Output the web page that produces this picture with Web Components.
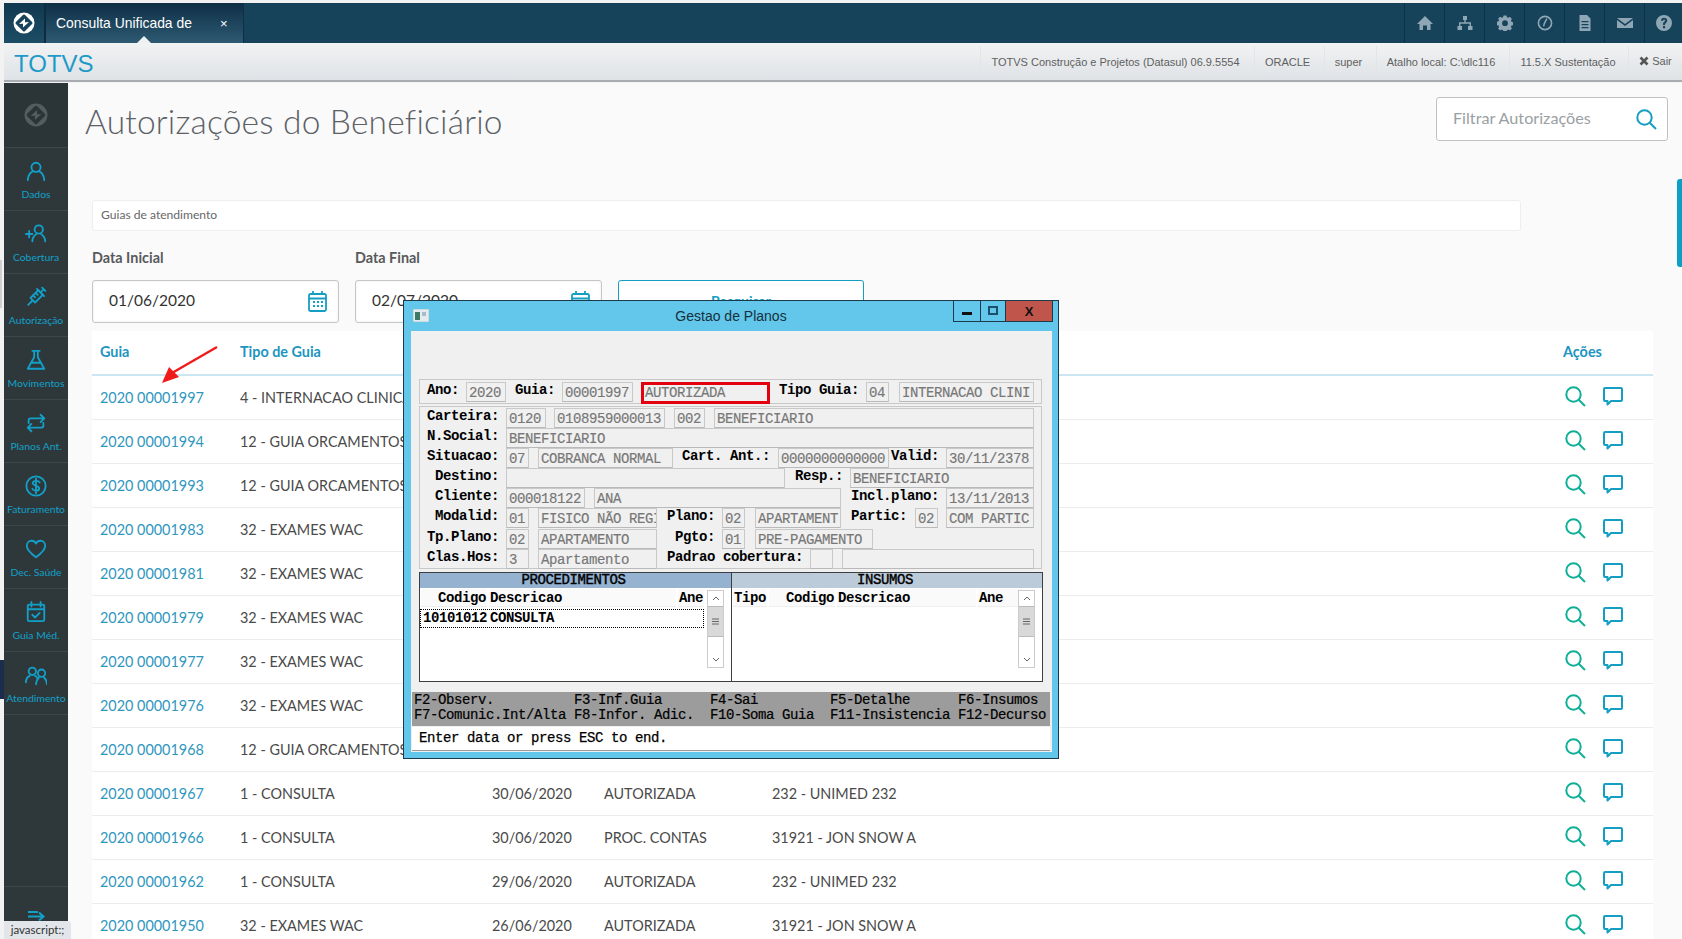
<!DOCTYPE html>
<html><head><meta charset="utf-8">
<style>
html,body{margin:0;padding:0;height:939px;overflow:hidden;background:#fafafa;font-family:"Liberation Sans",sans-serif}
body{padding:3px 0 0 4px;box-sizing:border-box;position:relative;background:#f2f2f2}
</style></head><body>
<app-shell></app-shell>
<script>
const I=(d,w,h,vb,extra='')=>`<svg width="${w}" height="${h}" viewBox="${vb||'0 0 24 24'}" fill="none" stroke="currentColor" stroke-width="2" stroke-linecap="round" stroke-linejoin="round" ${extra}>${d}</svg>`;
function def(n,html,setup){customElements.define(n,class extends HTMLElement{constructor(){super();this.attachShadow({mode:'open'}).innerHTML=typeof html==='function'?html(this):html}connectedCallback(){setup&&setup(this,this.shadowRoot)}})}

const topIcons=[
 '<path d="M8 1 L16 9 H13.5 V15 H10 V10.5 H6 V15 H2.5 V9 H0 Z" fill="currentColor"/>',
 '<path d="M6 1h4v4H8.7v2.3H14V11h1.5v4h-4.5v-4h1.6V8.7H3.4V11H5v4H.5v-4H2V7.3h5.3V5H6z" fill="currentColor"/>',
 '<path fill-rule="evenodd" d="M6.500 1h3l.4 1.700 1.400.6 1.500-1 2.100 2.100-1 1.500.6 1.400 1.700.4v3l-1.700.4-.6 1.400 1 1.500-2.100 2.100-1.500-1-1.400.6-.4 1.700h-3l-.4-1.700-1.400-.6-1.500 1-2.100-2.100 1-1.500-.6-1.400-1.700-.4V7.200l1.700-.4.6-1.400-1-1.500L3.200 2.300l1.500 1 1.400-.6zM8 5.800a2.900 2.900 0 100 5.800 2.900 2.900 0 000-5.800z" fill="currentColor" transform="translate(0 -.5)"/>',
 '<circle cx="8" cy="8" r="6.600" fill="none" stroke="currentColor" stroke-width="1.600"/><path d="M9.800 3.600 L7.200 8.800 L6.600 11.400" stroke="currentColor" stroke-width="1.500" fill="none"/>',
 '<path fill-rule="evenodd" d="M2.500 0H10l3.500 3.500V16h-11zM4.500 6v1.300h7V6zm0 3v1.300h7V9zm0 3v1.300h7V12z" fill="currentColor"/>',
 '<path d="M0 3h16L8 9zM0 5l8 6 8-6v8H0z" fill="currentColor"/>',
 '<path fill-rule="evenodd" d="M8 0a8 8 0 110 16A8 8 0 018 0zM5 5.800h2.200c0-.8.3-1.200.9-1.200s.9.4.9.9c0 1.200-2 1.500-2 3.600V10h2v-.5c0-1.300 2.200-1.700 2.200-4C11.200 3.700 9.900 2.700 8 2.700 6.100 2.700 5 3.900 5 5.800zM7 11v2.200h2.100V11z" fill="currentColor"/>'
];
const logo=(s,fg,bg)=>`<svg width="${s}" height="${s}" viewBox="0 0 22 22"><circle cx="11" cy="11" r="10.500" fill="${fg}"/><path d="M11 4 L18 11 L11 18 L4 11Z" fill="${bg}" stroke="${bg}" stroke-width="3" stroke-linejoin="round"/><path d="M6 12 L12 6.500 L12 11.500Z M16 10 L10 15.500 L10 10.500Z" fill="${fg}"/></svg>`;
def('top-bar',`<style>
:host{display:flex;height:40px;background:#16425a;color:#fff}
.logo{width:40px;display:flex;align-items:center;justify-content:center;background:linear-gradient(#10384f,#1d4d66);border-right:1px solid #0c2c40}
.tab{width:199px;box-sizing:border-box;border-right:1px solid #0e3044;background:linear-gradient(#0e2f46,#2d5a72);display:flex;align-items:center;padding-left:10px;font-size:13.900px;position:relative;border-left:1px solid #0c2c40}
.tab b{font-weight:400;position:absolute;left:174px;font-size:13px}
.tab:after{content:"";position:absolute;bottom:0;left:91px;border:7px solid transparent;border-bottom-color:#eff0f1;border-top:0}
.sp{flex:1}
.ic{width:40px;box-sizing:border-box;border-left:1px solid #0e3044;display:flex;align-items:center;justify-content:center;color:#8fa7b5}
.ic:last-child{width:38px}
</style>
<div class="logo">${logo(22,'#fff','#16425a')}</div>
<div class="tab">Consulta Unificada de<b>×</b></div><div class="sp"></div>`+
topIcons.map(p=>`<div class="ic"><svg width="16" height="16" viewBox="0 0 16 16">${p}</svg></div>`).join(''));

def('sub-bar',`<style>
:host{display:flex;height:39px;box-sizing:border-box;background:linear-gradient(#f1f2f3,#dfe3e7);border-bottom:2px solid #a9adb1;align-items:stretch;color:#5f5f5f;font-size:11px}
.l{flex:1;color:#1e9ac8;font-size:24px;padding:5px 0 0 10px;display:flex;align-items:center}
.s{display:flex;align-items:center;justify-content:center;border-left:1px solid #e2e5e8;margin-top:3px;margin-bottom:3px;box-sizing:border-box;padding:0 4px 0 0}
</style><div class="l">TOTVS</div>
<div class="s" style="width:274px">TOTVS Construção e Projetos (Datasul) 06.9.5554</div>
<div class="s" style="width:70px">ORACLE</div>
<div class="s" style="width:52px">super</div>
<div class="s" style="width:133px">Atalho local: C:\\dlc116</div>
<div class="s" style="width:119px;padding-right:2px">11.5.X Sustentação</div>
<div class="s" style="width:54px;padding:0 0 2px 0"><svg width="10" height="10" viewBox="0 0 10 10" style="margin-right:3px"><path d="M1.500 1.500L8.500 8.500M8.500 1.500L1.500 8.500" stroke="#555" stroke-width="2.600"/></svg>Sair</div>`);

const sideItems=[
 ['Dados','<circle cx="12" cy="8" r="5"/><path d="M3 22c0-6 4-9 5.500-9.500M21 22c0-6-4-9-5.500-9.500"/>'],
 ['Cobertura','<circle cx="15" cy="7" r="4.500"/><path d="M8 20c0-5 3-7 4.500-8M22 20c0-5-3-7-4.500-8M1 12h7M4.500 8.500v7"/>'],
 ['Autorização','<g transform="rotate(45 12 12)"><rect x="8.500" y="5" width="7" height="12"/><path d="M12 17v7M6.500 5h11M12 5V0M9.500 0h5M8.500 9h3M8.500 13h3"/></g>'],
 ['Movimentos','<path d="M8 2h8M10 2v7L3 21.500h18L14 9V2M6.500 15h11"/>'],
 ['Planos Ant.','<path d="M4 12V9a2 2 0 012-2h15M17 3l4 4-4 4M20 12v3a2 2 0 01-2 2H3M7 21l-4-4 4-4"/>'],
 ['Faturamento','<circle cx="12" cy="12" r="10.500"/><path d="M16 8c-1-2-7-2.500-7.500.5C8 12 16 11 15.500 15c-.5 3-6.500 2.500-7.500 0M12 4v16"/>'],
 ['Dec. Saúde','<path d="M12 21C5 16 2 12.500 2 8.500 2 5 4.500 3 7 3c2 0 4 1 5 3 1-2 3-3 5-3 2.500 0 5 2 5 5.500 0 4-3 7.500-10 12.500z"/>'],
 ['Guia Méd.','<rect x="3" y="4" width="18" height="18" rx="1.500"/><path d="M3 9h18M7 1v5M17 1v5M8 15l3 3 5-5"/>'],
 ['Atendimento','<circle cx="8" cy="8" r="4"/><circle cx="18" cy="10" r="4"/><path d="M1 20c0-4 2-6 4-7M11 13c1 .5 2 1.500 2 2M12 22c0-4 2-6 3-7M24 22c0-4-2-6-3-7"/>']
];
def('side-nav',`<style>
:host{display:flex;flex-direction:column;width:64px;background:#2e383b;height:100%;box-sizing:border-box;color:#12a0c8;overflow:hidden;position:relative}
.h{height:65px;border-bottom:1px solid #3d474a;display:flex;align-items:center;justify-content:center;box-sizing:border-box;background:#2b3437}
.i{height:63px;box-sizing:border-box;border-bottom:1px solid #3d474a;display:flex;flex-direction:column;align-items:center;padding-top:12px;white-space:nowrap}
.i span{margin-top:6px;font-family:"Lato",sans-serif;font-size:10.400px;width:63px;text-align:center;display:block}
.sp{flex:1;border-bottom:1px solid #3d474a}
.b{height:52px;display:flex;justify-content:center;padding-top:24px;box-sizing:border-box}
</style>
<div class="h">${logo(24,'#535d60','#2b3437')}</div>`+
sideItems.map(([l,p])=>`<div class="i">${I(p,22,22)}<span>${l}</span></div>`).join('')+
`<div class="sp"></div><div class="b"><svg width="17" height="10" viewBox="0 0 17 10" fill="none" stroke="currentColor" stroke-width="2"><path d="M0 1h10M0 5.500h15M11 1.500l4.500 4-4.500 4"/></svg></div>`);

const cal=`<svg width="19" height="21" viewBox="0 0 19 21" fill="none" stroke="#159ec4" stroke-width="1.800"><rect x="1" y="3" width="17" height="17" rx="1.500"/><path d="M1 7.500h17M5 0v4M14 0v4"/><path d="M5 11h2M9 11h2M13 11h2M5 15h2M9 15h2M13 15h2" stroke-width="1.800"/></svg>`;
def('date-field',t=>`<style>
:host{display:block;width:247px}
label{display:block;font:700 14.400px "Lato",sans-serif;color:#58595b;height:19px;margin-bottom:12px;line-height:18px}
.b{height:43px;box-sizing:border-box;border:1px solid #c3c7c9;border-radius:3px;background:#fff;display:flex;align-items:center;padding:0 11px 0 16px;font:400 15.500px "Lato",sans-serif;color:#333;box-shadow:inset 0 0 3px #eee}
.b span{flex:1;position:relative;top:-1.500px}
</style><label>${t.getAttribute('label')}</label><div class="b"><span>${t.getAttribute('value')}</span>${cal}</div>`);

const lens=c=>`<svg width="21" height="21" viewBox="0 0 21 21" fill="none" stroke="${c}" stroke-width="2"><circle cx="8.500" cy="8.500" r="7.200"/><path d="M13.700 13.700L20 20"/></svg>`;
const bubble=`<svg width="20" height="19" viewBox="0 0 20 19" fill="none" stroke="#159ec4" stroke-width="2" stroke-linejoin="round"><path d="M2 1h16a1 1 0 011 1v11a1 1 0 01-1 1H8l-3.500 3.500V14H2a1 1 0 01-1-1V2a1 1 0 011-1z"/></svg>`;
const rows=[
['00001997','4 - INTERNACAO CLINICA'],['00001994','12 - GUIA ORCAMENTOS'],['00001993','12 - GUIA ORCAMENTOS'],['00001983','32 - EXAMES WAC'],['00001981','32 - EXAMES WAC'],['00001979','32 - EXAMES WAC'],['00001977','32 - EXAMES WAC'],['00001976','32 - EXAMES WAC'],['00001968','12 - GUIA ORCAMENTOS'],
['00001967','1 - CONSULTA','30/06/2020','AUTORIZADA','232 - UNIMED 232'],['00001966','1 - CONSULTA','30/06/2020','PROC. CONTAS','31921 - JON SNOW A'],['00001962','1 - CONSULTA','29/06/2020','AUTORIZADA','232 - UNIMED 232'],['00001950','32 - EXAMES WAC','26/06/2020','AUTORIZADA','31921 - JON SNOW A']];
def('guia-table',`<style>
:host{display:block;background:#fff;font:400 14.400px "Lato",sans-serif;color:#4a4a4a}
.r{display:grid;grid-template-columns:140px 252px 112px 168px 1fr 90px;height:44px;box-sizing:border-box;border-bottom:1px solid #ececec;align-items:center;padding-left:8px;white-space:nowrap}
.r.h{height:45px;border-bottom:2px solid #cbe6f0;color:#1c95bf;font-weight:700;padding-bottom:2px}
.g{color:#2f97bd}
.a{display:flex;align-items:center;gap:17px;padding:0 0 3px 2px}
</style><div class="r h"><div>Guia</div><div>Tipo de Guia</div><div></div><div></div><div></div><div>Ações</div></div>`+
rows.map(r=>`<div class="r"><div class="g">2020 ${r[0]}</div><div>${r[1]}</div><div>${r[2]||''}</div><div>${r[3]||''}</div><div>${r[4]||''}</div><div class="a">${lens('#10b096')}${bubble}</div></div>`).join(''));

const row=(items)=>{let x=419+1;let h='';items.forEach(([a,b,t,k])=>{h+=`<span class="${k==='l'?'lb':k==='r'?'f red':'f'}" style="margin-left:${a-x}px;width:${b-a}px">${t||''}</span>`;x=b});return `<div class="rw">${h}</div>`};
const L=(a,b,t)=>[a,b,t,'l'];
const F=[[L(428,459,'Ano:'),[467,507,'2020'],L(516,554,'Guia:'),[563,634,'00001997'],[642,771,'AUTORIZADA','r'],L(780,859,'Tipo Guia:'),[867,890,'04'],[900,1035,'INTERNACAO CLINI']]];
const G=[
[L(428,499,'Carteira:'),[507,547,'0120'],[555,666,'0108959000013'],[675,706,'002'],[715,1035,'BENEFICIARIO']],
[L(428,499,'N.Social:'),[507,1035,'BENEFICIARIO']],
[L(428,499,'Situacao:'),[507,530,'07'],[539,674,'COBRANCA NORMAL'],L(683,771,'Cart. Ant.:'),[779,890,'0000000000000'],L(892,939,'Valid:'),[947,1035,'30/11/2378']],
[L(436,499,'Destino:'),[507,786,''],L(796,843,'Resp.:'),[851,1035,'BENEFICIARIO']],
[L(436,499,'Cliente:'),[507,586,'000018122'],[595,842,'ANA'],L(852,939,'Incl.plano:'),[947,1035,'13/11/2013']],
[L(436,499,'Modalid:'),[507,530,'01'],[539,658,'FISICO NÃO REGI'],L(668,715,'Plano:'),[723,746,'02'],[756,842,'APARTAMENT'],L(852,907,'Partic:'),[916,939,'02'],[947,1035,'COM PARTIC']],
[L(428,499,'Tp.Plano:'),[507,530,'02'],[539,658,'APARTAMENTO'],L(676,715,'Pgto:'),[723,746,'01'],[756,874,'PRE-PAGAMENTO']],
[L(428,499,'Clas.Hos:'),[507,530,'3'],[539,658,'Apartamento'],L(668,802,'Padrao cobertura:'),[811,834,''],[843,1035,'']]
];
const up='<svg width="8" height="5" viewBox="0 0 8 5"><path d="M1 4l3-3 3 3" fill="none" stroke="#666"/></svg>',dn='<svg width="8" height="5" viewBox="0 0 8 5"><path d="M1 1l3 3 3-3" fill="none" stroke="#666"/></svg>',gr='<svg width="7" height="7" viewBox="0 0 7 7"><path d="M0 1h7M0 3.500h7M0 6h7" stroke="#666"/></svg>';
const sb=`<div class="sb"><i>${up}</i><i class="t">${gr}</i><div class="s"></div><i>${dn}</i></div>`;
def('legacy-window',`<style>
:host{position:absolute;width:656px;height:459px;box-sizing:border-box;background:#62c7ea;border:1px solid #1c3b4a;font:400 14px "Liberation Mono",monospace;letter-spacing:-.4px;color:#000}
.tb{height:30px;display:flex;position:relative}
.ti{position:absolute;left:9px;top:8px}
.tt{position:absolute;left:0;right:0;top:5px;text-align:center;font:400 14px "Liberation Sans",sans-serif;letter-spacing:0;color:#17303c;line-height:20px}
.btns{position:absolute;right:5px;top:0;display:flex;height:21px}
.btn{box-sizing:border-box;height:21px;border:1px solid #1c3b4a;border-top:0;display:flex;align-items:center;justify-content:center;border-left:0}
.client{position:absolute;left:7px;top:30px;width:641px;height:421px;background:#f0f0f0;box-sizing:border-box;padding:48px 0 0 8px;display:flex;flex-direction:column}
.fr{width:623px;box-sizing:border-box;border:1px solid #c8c8c8}
.fr.a{height:25px;margin-bottom:2px;padding-top:2px}
.fr.b{height:163px;padding-top:1px}
.rw{display:flex;height:20.100px;align-items:flex-start;white-space:nowrap;margin-left:-1px}
.lb{font-weight:700;display:block;flex:none;height:20px;line-height:17px;white-space:nowrap}
.f{display:block;flex:none;box-sizing:border-box;height:20px;line-height:20px;border:1px solid #c9c9c9;border-bottom-color:#b9b9b9;color:#777;overflow:hidden;white-space:nowrap;padding-left:2px;-webkit-text-stroke:.15px #777}
.f.red{border:3px solid #e3000f;height:22px;line-height:17px;padding-left:1px}
.pn{display:flex;height:110px;margin-top:3px;width:624px;box-sizing:border-box;border:1.500px solid #3b3f42;background:#fff}
.p{width:311.500px;position:relative;box-sizing:border-box;display:flex;flex-direction:column}
.p+.p{border-left:1.500px solid #3b3f42}
.ph{height:15px;line-height:15px;text-align:center;background:#95b2d0;font-size:14px;-webkit-text-stroke:.4px #000;flex:none;padding-right:4px}
.p+.p .ph{background:#bccbda}
.cols{display:flex;height:18px;margin-top:1px;padding-left:1px;gap:2px;font-weight:700;line-height:18px}
.cols div{background:#fafafa;border-bottom:1px solid #eee;box-sizing:border-box;white-space:nowrap;overflow:hidden;height:18px;padding:0 1px}
.rr{width:284px;height:19px;margin-top:2px;box-sizing:border-box;outline:1px dotted #000;outline-offset:-1px;display:flex;font-weight:700;line-height:18px}
.sb{position:absolute;right:7px;top:17px;width:17px;height:78px;box-sizing:border-box;border:1px solid #ccc;background:#fff;display:flex;flex-direction:column;color:#666}
.sb i{display:flex;height:15px;flex:none;align-items:center;justify-content:center}
.sb i.t{height:31px;background:#d9d9d9;border-top:1px solid #bbb;border-bottom:1px solid #bbb;box-sizing:border-box}
.sb .s{flex:1}
.fk{position:absolute;left:1px;top:361px;width:638px;height:34px;background:#9c9c9c;display:flex;flex-direction:column;padding:1px 0 0 2px;box-sizing:border-box;line-height:15px}
.fk div{display:flex;white-space:nowrap;height:15px;-webkit-text-stroke:.2px #000}
.fk span{display:block;flex:none}
.st{position:absolute;left:1px;top:396px;width:638px;height:24px;background:#fff;box-sizing:border-box;border-bottom:1px solid #999;padding-left:7px;line-height:23px;-webkit-text-stroke:.25px #000}
</style>
<div class="tb">
<svg class="ti" width="16" height="13" viewBox="0 0 16 13"><rect width="16" height="13" fill="#e4eaee" stroke="#9bb" stroke-width=".6"/><rect x="2" y="3" width="5" height="8" fill="#3d7a66"/><rect x="9" y="3" width="4" height="4" fill="#a9bcc6"/></svg>
<div class="tt">Gestao de Planos</div>
<div class="btns">
<div class="btn" style="width:28px;border-left:1px solid #1c3b4a"><svg width="10" height="10" viewBox="0 0 10 10"><rect x="0" y="6" width="10" height="3" fill="#111"/></svg></div>
<div class="btn" style="width:25px"><svg width="10" height="10" viewBox="0 0 10 10"><rect x="1" y="1" width="8" height="7" fill="none" stroke="#1c4f6a" stroke-width="2"/></svg></div>
<div class="btn" style="width:47px;background:#c0564b;color:#111;font:700 13px 'Liberation Sans',sans-serif;letter-spacing:0">X</div>
</div></div>
<div class="client">
<div class="fr a">`+F.map(row).join('')+`</div>
<div class="fr b">`+G.map(row).join('')+`</div>
<div class="pn">
<div class="p"><div class="ph">PROCEDIMENTOS</div>
<div class="cols"><div style="width:66px;text-align:right">Codigo</div><div style="width:187px">Descricao</div><div style="width:26px">Ane</div></div>
<div class="rr"><span style="width:70px;padding-left:3px;box-sizing:border-box">10101012</span><span>CONSULTA</span></div>
${sb}
</div>
<div class="p"><div class="ph">INSUMOS</div>
<div class="cols"><div style="width:34px">Tipo</div><div style="width:66px;text-align:right">Codigo</div><div style="width:139px">Descricao</div><div style="width:43px">Ane</div></div>
${sb}
</div>
</div>
<div class="fk"><div><span style="width:160px">F2-Observ.</span><span style="width:136px">F3-Inf.Guia</span><span style="width:120px">F4-Sai</span><span style="width:128px">F5-Detalhe</span><span>F6-Insumos</span></div>
<div><span style="width:160px">F7-Comunic.Int/Alta</span><span style="width:136px">F8-Infor. Adic.</span><span style="width:120px">F10-Soma Guia</span><span style="width:128px">F11-Insistencia</span><span>F12-Decurso</span></div></div>
<div class="st">Enter data or press ESC to end.</div>
</div>`);

def('app-shell',`<style>
:host{display:block;width:1678px;height:936px;position:relative}
.main{display:flex;height:856px;margin-top:1px}
.content{flex:1;background:#fafafa;overflow:hidden;padding-left:24px;position:relative}
.hd{display:flex;height:117px;padding-top:14px;box-sizing:border-box}
h1{margin:-1px 0 0 -7px;font:300 33.500px "Lato",sans-serif;color:#5c6166;flex:1;line-height:50px;letter-spacing:.2px}
.flt{width:232px;height:44px;box-sizing:border-box;border:1px solid #bfc3c6;border-radius:3px;background:#fff;display:flex;align-items:center;justify-content:space-between;padding:0 10px 0 16px;font:400 16.200px "Lato",sans-serif;color:#9a9fa3;margin:0 14px 0 0}
.flt span{position:relative;top:-2px}
.card{width:1429px;height:31px;background:#fff;border:1px solid #eee;border-radius:3px;box-sizing:border-box;font:400 12.100px "Lato",sans-serif;color:#666;line-height:28px;padding-left:8px;margin-bottom:18px}
.fm{display:flex;gap:16px;height:93px;width:1561px;box-sizing:border-box}
.bt{width:246px;height:43px;margin-top:31px;box-sizing:border-box;border:1px solid #159ec4;border-radius:3px;background:#fff;color:#159ec4;font:700 14px "Lato",sans-serif;display:flex;align-items:center;justify-content:center;padding-bottom:3px}
guia-table{width:1561px;margin-top:-11px}
.arrow{position:absolute;left:146px;top:337px}
.tip{position:absolute;left:0;bottom:0;width:67px;height:18px;background:#e2e6ea;border-radius:0 3px 0 0;font:400 11.500px "Lato",sans-serif;color:#333;line-height:18px;text-align:center}
.sc{position:absolute;right:0;top:176px;width:5px;height:88px;background:#0e9fc5;border-radius:3px 0 0 3px}
.nv{position:absolute;left:-4px;top:657px;width:4px;height:39px;background:#1a2d4c}
.gy{position:absolute;left:-4px;top:257px;width:2px;height:48px;background:#cfcfcf}
</style>
<top-bar></top-bar><sub-bar></sub-bar>
<div class="main"><side-nav></side-nav>
<div class="content">
<div class="hd"><h1>Autorizações do Beneficiário</h1><div class="flt"><span>Filtrar Autorizações</span>${lens('#159ec4')}</div></div>
<div class="card">Guias de atendimento</div>
<div class="fm"><date-field label="Data Inicial" value="01/06/2020"></date-field><date-field label="Data Final" value="02/07/2020"></date-field><div class="bt">Pesquisar</div></div>
<guia-table></guia-table>
</div></div>
<svg class="arrow" width="75" height="50" viewBox="0 0 75 50"><path d="M67 7 L22 33" stroke="#f01a1a" stroke-width="2.400"/><path d="M12 43 L19 27 L29 37Z" fill="#f01a1a"/></svg>
<div class="tip">javascript:;</div>
<div class="sc"></div><div class="nv"></div><div class="gy"></div>
<legacy-window style="left:399px;top:297px"></legacy-window>
`);
</script>
</body></html>
